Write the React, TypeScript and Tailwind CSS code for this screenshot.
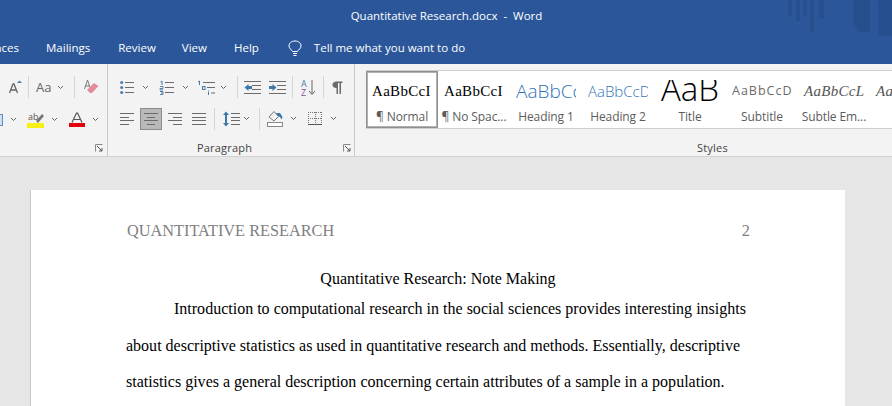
import React from "react";

const G = "#6b6b6b";
const B = "#4a7ba7";

function Chev({ className = "" }: { className?: string }) {
  return (
    <svg width="7" height="5" viewBox="0 0 7 5" className={`shrink-0 ${className}`}>
      <path d="M1 1 L3.5 3.5 L6 1" fill="none" stroke="#666" strokeWidth="1" />
    </svg>
  );
}

function Lines({ w, rows, className = "" }: { w: number; rows: [number, number][]; className?: string }) {
  return (
    <svg width={w} height="13" viewBox={`0 0 ${w} 13`} className={`shrink-0 ${className}`}>
      {rows.map(([a, b], i) => (
        <rect key={i} x={a} y={Math.round(1 + i * (11 / (rows.length - 1)))} width={b - a} height="1" fill={G} />
      ))}
    </svg>
  );
}

function ListIcon({ kind, className = "" }: { kind: "b" | "n" | "m"; className?: string }) {
  const w = kind === "m" ? 18 : kind === "n" ? 15 : 14;
  return (
    <svg width={w} height="15" viewBox={`0 0 ${w} 15`} className={`shrink-0 ${className}`}>
      {kind === "b" && (
        <>
          {[2, 7, 12].map((y) => (
            <g key={y}>
              <circle cx="1.7" cy={y + 0.5} r="1.5" fill={B} />
              <rect x="5" y={y} width="9" height="1" fill={G} />
            </g>
          ))}
        </>
      )}
      {kind === "n" && (
        <>
          <path d="M1.5 2 L3 1 V5" fill="none" stroke={B} />
          <path d="M1 6.5 H4 V8.5 H1 V10 H4" fill="none" stroke={B} strokeWidth="0.9" />
          <path d="M1 11.5 H4 V14.5 H1 M2 13 H4" fill="none" stroke={B} strokeWidth="0.9" />
          {[2, 7, 12].map((y) => (
            <rect key={y} x="6" y={y} width="9" height="1" fill={G} />
          ))}
        </>
      )}
      {kind === "m" && (
        <>
          <path d="M1 2 L2.5 1 V5" fill="none" stroke={B} />
          <rect x="6" y="2" width="12" height="1" fill={G} />
          <rect x="5.5" y="6.5" width="2.5" height="3" fill="none" stroke={B} strokeWidth="1" />
          <rect x="10" y="7" width="8" height="1" fill={G} />
          <rect x="11" y="10.5" width="1" height="1" fill={B} />
          <rect x="11" y="12" width="1" height="3" fill={B} />
          <rect x="14" y="12.5" width="4" height="1" fill={G} />
        </>
      )}
    </svg>
  );
}

function Indent({ dir, className = "" }: { dir: "l" | "r"; className?: string }) {
  return (
    <svg width="17" height="13" viewBox="0 0 17 13" className={`shrink-0 ${className}`}>
      {[0, 12].map((y) => (
        <rect key={y} x="0" y={y} width="17" height="1" fill={G} />
      ))}
      {[4, 8].map((y) => (
        <rect key={y} x="8" y={y} width="9" height="1" fill={G} />
      ))}
      {dir === "l" ? (
        <path d="M0.5 6.5 L4.5 3 V5 H8 V8 H4.5 V10 Z" fill="#3c78a8" />
      ) : (
        <path d="M7.5 6.5 L3.5 3 V5 H0 V8 H3.5 V10 Z" fill="#3c78a8" />
      )}
    </svg>
  );
}

function Sep({ className = "" }: { className?: string }) {
  return <div className={`w-px h-[22px] bg-[#d4d4d4] shrink-0 ${className}`} />;
}

function Launcher() {
  return (
    <svg width="8" height="8" viewBox="0 0 8 8" className="shrink-0">
      <path d="M0.5 7.5 V0.5 H7.5" fill="none" stroke="#8a8a8a" />
      <path d="M2 2 L7 7 M7 4 V7 H4" fill="none" stroke="#555" />
    </svg>
  );
}

function Style({
  preview,
  label,
  selected,
  clip,
}: {
  preview: React.ReactNode;
  label: string;
  selected?: boolean;
  clip?: boolean;
}) {
  return (
    <div
      className={`w-[72px] h-[57px] shrink-0 flex flex-col items-center overflow-hidden ${
        selected ? "border-2 border-[#b1b1b1] outline outline-1 outline-[#8f8f8f] -outline-offset-1" : "border-2 border-transparent"
      }`}
    >
      <div className={`h-[37px] w-[60px] flex items-center ${clip ? "overflow-hidden" : ""} whitespace-nowrap`}>{preview}</div>
      <div className="text-[12px] leading-[14px] text-[#5c5c5c] whitespace-nowrap font-['Open_Sans',sans-serif] tracking-[-0.1px]">
        {label}
      </div>
    </div>
  );
}

export default function App() {
  const serif = "font-['Liberation_Serif',serif]";
  return (
    <div className="w-[892px] h-[406px] overflow-hidden flex flex-col bg-[#e6e6e6] font-['Open_Sans',sans-serif]">
      {/* Title bar */}
      <header className="relative h-[64px] shrink-0 bg-[#2b579a] text-white">
        <svg width="104" height="36" viewBox="0 0 104 36" className="absolute right-0 top-0">
          <g fill="#234a86" opacity="0.6">
            <rect x="0" width="4" height="16" />
            <rect x="8" width="4" height="21" />
            <rect x="15" width="4" height="16" />
            <rect x="22" width="4" height="32" />
            <rect x="31" width="5" height="18" />
            <path d="M65 0 H82 V32 H72 L65 24 Z" />
            <path d="M90 0 H104 V36 H91 Z" />
          </g>
        </svg>
        <div className="h-[32px] flex items-center justify-center text-[11.5px] whitespace-pre pl-[1px]">
          Quantitative Research.docx  -  Word
        </div>
        <nav className="h-[32px] flex items-center text-[11.5px] whitespace-nowrap">
          <span className="w-[19px] overflow-hidden flex justify-end">
            <span>ences</span>
          </span>
          <span className="ml-[27px]">Mailings</span>
          <span className="ml-[28px]">Review</span>
          <span className="ml-[26px]">View</span>
          <span className="ml-[27px]">Help</span>
          <svg width="14" height="17" viewBox="0 0 14 17" className="ml-[29px] shrink-0">
            <path
              d="M4.5 11.5 C3.5 9.5 1 8.5 1 6 C1 3 3.5 1 7 1 C10.5 1 13 3 13 6 C13 8.5 10.5 9.5 9.5 11.5 Z M5 13.5 H9 M5.5 15.5 H8.5"
              fill="none"
              stroke="#fff"
              strokeWidth="1"
            />
          </svg>
          <span className="ml-[12px]">Tell me what you want to do</span>
        </nav>
      </header>

      {/* Ribbon */}
      <section className="h-[93px] shrink-0 bg-[#f3f3f3] border-b border-[#d2d2d2] flex text-[#444]">
        {/* Font group */}
        <div className="w-[108px] shrink-0 border-r border-[#c9c9c9] flex flex-col">
          <div className="h-[34px] mt-[6px] flex items-center">
            <svg width="13" height="14" viewBox="0 0 13 14" className="ml-[9px] shrink-0">
              <path d="M0.5 13 L4 4 H5 L8.5 13 M2 10 H7" fill="none" stroke="#666" strokeWidth="1.3" />
              <path d="M8 3 L10.5 0.5 L13 3 Z" fill={B} />
            </svg>
            <Sep className="ml-[6px]" />
            <span className="ml-[7px] w-[16px] text-[13px] text-[#666] leading-none">Aa</span>
            <Chev className="ml-[5px]" />
            <Sep className="ml-[10px]" />
            <svg width="15" height="16" viewBox="0 0 15 16" className="ml-[9px] shrink-0">
              <path d="M0.5 10 L3.5 1 L6.5 10 M1.5 7 H5.5" fill="none" stroke="#777" strokeWidth="1" />
              <path d="M3 11 L10 4 L14.5 7 L8 14 H6 Z" fill="#e58b9a" />
            </svg>
          </div>
          <div className="h-[31px] flex items-center">
            <div className="w-[3px] h-[12px] overflow-hidden shrink-0">
              <div className="w-[8px] h-[12px] bg-[#cfe0f0] border border-[#5b8fc4] -ml-[5px]" />
            </div>
            <Chev className="ml-[7px]" />
            <svg width="18" height="16" viewBox="0 0 18 16" className="ml-[10px] shrink-0">
              <text x="1" y="8" fontSize="9" fill="#555" fontFamily="Open Sans, sans-serif">
                ab
              </text>
              <path d="M9 9 L15 2 L17 4 L11 11 Z" fill="#777" />
              <rect x="0" y="11" width="17" height="5" fill="#f6f014" />
            </svg>
            <Chev className="ml-[6px]" />
            <svg width="16" height="15" viewBox="0 0 16 15" className="ml-[11px] shrink-0">
              <path d="M3 10.5 L7.5 1 H8.5 L13 10.5 M5 7.5 H11" fill="none" stroke="#555" strokeWidth="1.2" />
              <rect x="0" y="11" width="16" height="4" fill="#e3000f" />
            </svg>
            <Chev className="ml-[7px]" />
          </div>
          <div className="flex-1 flex justify-end items-end pb-[4px] pr-[4px]">
            <Launcher />
          </div>
        </div>

        {/* Paragraph group */}
        <div className="w-[247px] shrink-0 border-r border-[#c9c9c9] flex flex-col">
          <div className="h-[34px] mt-[6px] flex items-center">
            <ListIcon kind="b" className="ml-[12px]" />
            <Chev className="ml-[8px]" />
            <ListIcon kind="n" className="ml-[10px]" />
            <Chev className="ml-[8px]" />
            <ListIcon kind="m" className="ml-[8px]" />
            <Chev className="ml-[5px]" />
            <Sep className="ml-[10px]" />
            <Indent dir="l" className="ml-[6px]" />
            <Indent dir="r" className="ml-[8px]" />
            <Sep className="ml-[6px]" />
            <svg width="15" height="17" viewBox="0 0 15 17" className="ml-[8px] shrink-0">
              <text x="0" y="8" fontSize="9" fill="#4a7ba7" fontFamily="Open Sans, sans-serif">
                A
              </text>
              <text x="0" y="16.5" fontSize="9" fill="#8a4f9e" fontFamily="Open Sans, sans-serif">
                Z
              </text>
              <path d="M11 1 V15 M8 12 L11 15.5 L14 12" fill="none" stroke="#666" strokeWidth="1" />
            </svg>
            <Sep className="ml-[7px]" />
            <svg width="11" height="13" viewBox="0 0 11 13" className="ml-[8px] shrink-0">
              <path d="M4.5 7 C1.5 7 0.5 5.5 0.5 3.7 C0.5 1.8 2 0.5 4.5 0.5 H10.5 V2 H9 V13 H7.5 V2 H6 V13 H4.5 Z" fill="#6b6b6b" />
            </svg>
          </div>
          <div className="h-[23px] mt-[3px] flex items-center">
            <Lines w={14} rows={[[0, 14], [0, 9], [0, 14], [0, 9]]} className="ml-[12px]" />
            <div className="ml-[6px] w-[22px] h-[22px] bg-[#b9b9b9] border border-[#8c8c8c] flex items-center justify-center shrink-0">
              <Lines w={14} rows={[[0, 14], [3, 11], [0, 14], [3, 11]]} />
            </div>
            <Lines w={14} rows={[[0, 14], [5, 14], [0, 14], [5, 14]]} className="ml-[6px]" />
            <Lines w={14} rows={[[0, 14], [0, 14], [0, 14], [0, 14]]} className="ml-[10px]" />
            <Sep className="ml-[8px]" />
            <svg width="17" height="16" viewBox="0 0 17 16" className="ml-[8px] shrink-0">
              <path d="M3 0.5 L6 4 H4 V12 H6 L3 15.5 L0 12 H2 V4 H0 Z" fill="#3c78a8" />
              <path d="M8 2.5 H17 M8 6.5 H17 M8 9.5 H17 M8 13.5 H17" stroke={G} strokeWidth="1" />
            </svg>
            <Chev className="ml-[3px]" />
            <Sep className="ml-[9px]" />
            <svg width="17" height="17" viewBox="0 0 17 17" className="ml-[7px] shrink-0">
              <path d="M2 7 L7 1.5 L11.5 6.5 L7 11 Z" fill="none" stroke="#777" />
              <path d="M9 3 H13 L15.5 7 L14.5 9.5 L13 7 L11 6 Z" fill="#3c78a8" />
              <rect x="0.5" y="12.5" width="15" height="4" fill="#fff" stroke="#888" />
            </svg>
            <Chev className="ml-[6px]" />
            <svg width="14" height="13" viewBox="0 0 14 13" className="ml-[11px] shrink-0">
              <path
                d="M0 0.5 H14 M0 6.5 H14 M0.5 0 V13 M7.5 0 V13 M13.5 0 V13"
                fill="none"
                stroke="#777"
                strokeDasharray="1 1"
              />
              <path d="M0 12.5 H14" stroke="#555" />
            </svg>
            <Chev className="ml-[8px]" />
          </div>
          <div className="flex-1 flex items-end justify-between pb-[1px] pr-[3px]">
            <span className="w-[233px] text-center text-[11px] leading-[14px] tracking-[0.2px] text-[#444]">Paragraph</span>
            <span className="pb-[3px]">
              <Launcher />
            </span>
          </div>
        </div>

        {/* Styles group */}
        <div className="flex-1 flex flex-col min-w-0">
          <div className="mt-[6px] ml-[11px] h-[59px] bg-white border-y border-[#cfcfcf] flex overflow-hidden">
            <Style
              selected
              label="¶ Normal"
              preview={<span className={`${serif} text-[15px] tracking-[0.3px] text-black`}>AaBbCcI</span>}
            />
            <Style
              label="¶ No Spac..."
              preview={<span className={`${serif} text-[15px] tracking-[0.3px] text-black`}>AaBbCcI</span>}
            />
            <Style
              clip
              label="Heading 1"
              preview={<span className="font-['Open_Sans',sans-serif] font-light text-[19px] text-[#2e74b5]">AaBbCcD</span>}
            />
            <Style
              clip
              label="Heading 2"
              preview={<span className="font-['Open_Sans',sans-serif] font-light text-[15px] text-[#2e74b5]">AaBbCcDd</span>}
            />
            <Style
              label="Title"
              preview={
                <div className="h-[24px] overflow-hidden">
                  <span className="block ml-[1px] font-['Open_Sans',sans-serif] font-light text-[33px] leading-[18px] text-black">
                    AaB
                  </span>
                </div>
              }
            />
            <Style
              clip
              label="Subtitle"
              preview={<span className="font-['Open_Sans',sans-serif] text-[12.5px] tracking-[1px] text-[#6b6b6b]">AaBbCcDd</span>}
            />
            <Style
              label="Subtle Em..."
              preview={<span className={`${serif} italic text-[15px] tracking-[0.3px] text-[#555]`}>AaBbCcL</span>}
            />
            <Style
              label="Em"
              preview={<span className={`${serif} italic text-[15px] tracking-[0.3px] text-[#555]`}>AaBbCcDd</span>}
            />
          </div>
          <div className="flex-1 flex items-end pb-[1px]">
            <span className="ml-[342px] text-[11px] leading-[14px] tracking-[0.2px]">Styles</span>
          </div>
        </div>
      </section>

      {/* Document */}
      <main className="flex-1 pl-[30px] pt-[33px] min-h-0 overflow-hidden">
        <article
          className={`w-[815px] h-[400px] bg-white border-l border-[#c8c8c8] pl-[95px] pt-[32px] ${serif} text-[16.03px] text-black whitespace-nowrap`}
        >
          <div className="h-[18px] w-[624px] flex justify-between items-center text-[16.3px] text-[#7f7f7f] leading-[18px] pl-[1px]">
            <span>QUANTITATIVE RESEARCH</span>
            <span>2</span>
          </div>
          <div className="mt-[30px] w-[624px] text-center leading-[18px]">Quantitative Research: Note Making</div>
          <div className="mt-[12px] pl-[48px] leading-[18px]">
            Introduction to computational research in the social sciences provides interesting insights
          </div>
          <div className="mt-[19px] leading-[18px]">
            about descriptive statistics as used in quantitative research and methods. Essentially, descriptive
          </div>
          <div className="mt-[18px] leading-[18px]">
            statistics gives a general description concerning certain attributes of a sample in a population.
          </div>
        </article>
      </main>
    </div>
  );
}
